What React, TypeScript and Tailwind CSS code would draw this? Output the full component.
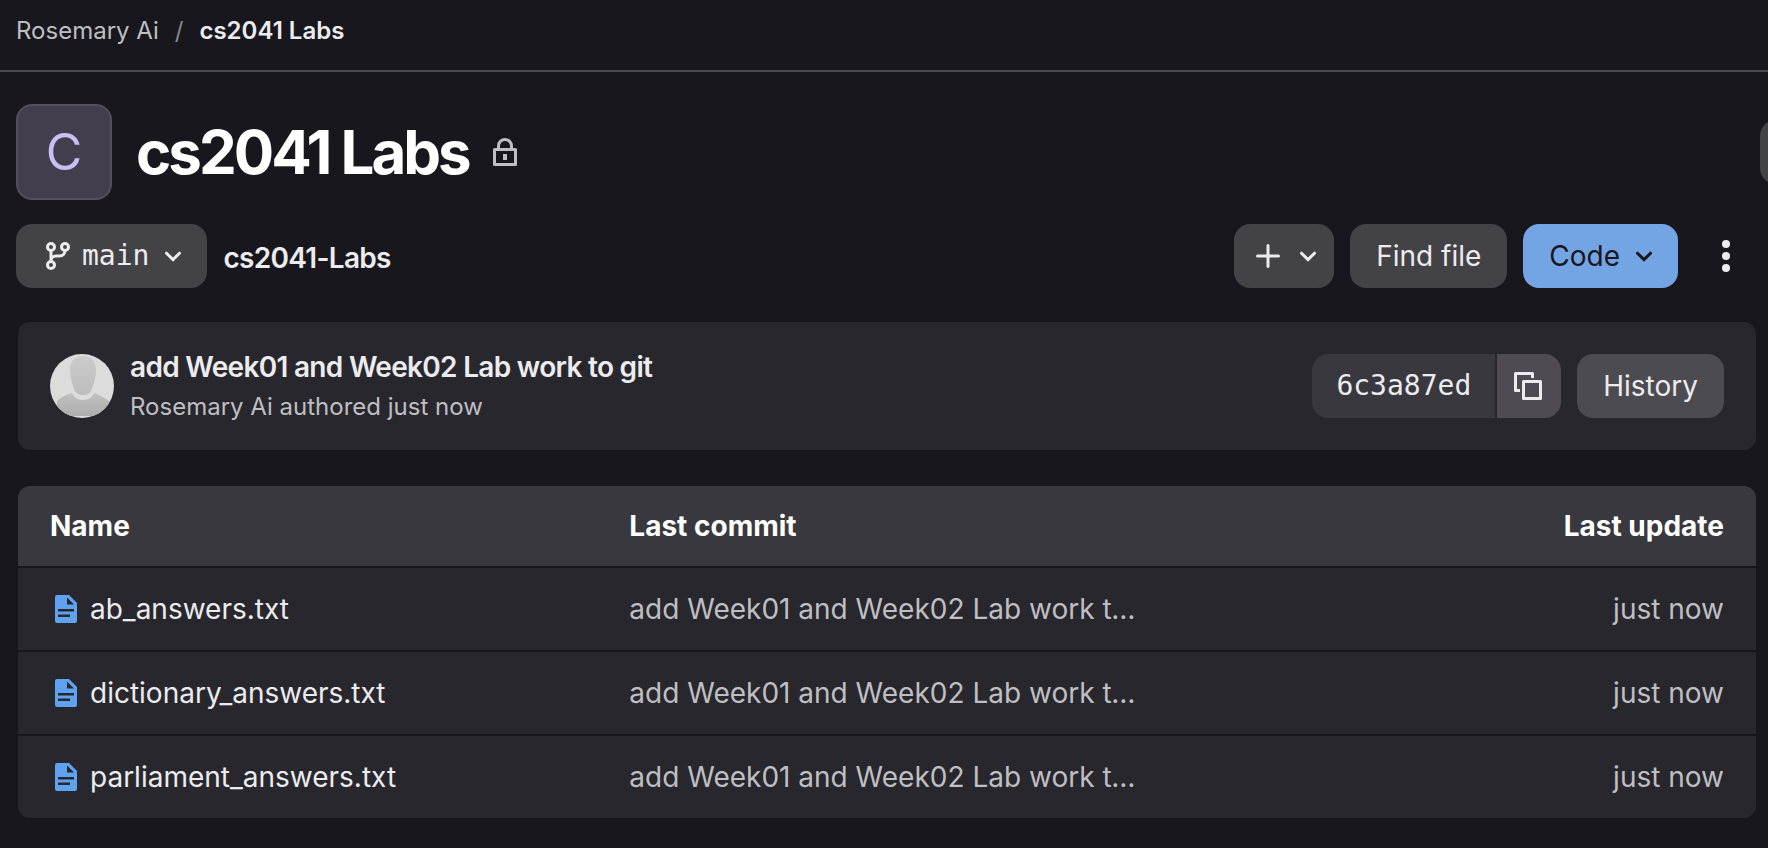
import type { ReactNode } from "react";

const COMMIT_TITLE = "add Week01 and Week02 Lab work to git";

const FILES = ["ab_answers.txt", "dictionary_answers.txt", "parliament_answers.txt"];

function Icon({ className, children }: { className?: string; children: ReactNode }) {
  return (
    <svg viewBox="0 0 16 16" fill="currentColor" className={`size-8 shrink-0 ${className ?? ""}`} aria-hidden>
      {children}
    </svg>
  );
}

function ChevronDown() {
  return (
    <Icon>
      <path d="M4.75 6.6 8 9.8l3.25-3.2" fill="none" stroke="currentColor" strokeWidth="1.5" strokeLinecap="round" />
    </Icon>
  );
}

function PlusIcon() {
  return (
    <Icon>
      <path d="M8 2.75v10.5M2.75 8h10.5" fill="none" stroke="currentColor" strokeWidth="1.5" strokeLinecap="round" />
    </Icon>
  );
}

function BranchIcon() {
  return (
    <Icon>
      <g fill="none" stroke="currentColor" strokeWidth="1.5">
        <circle cx="4.5" cy="3.5" r="1.75" />
        <circle cx="11.5" cy="3.5" r="1.75" />
        <circle cx="4.5" cy="12.5" r="1.75" />
        <path d="M4.5 5.25v5.5M11.5 5.25c0 1.6-1.1 2.75-2.75 2.75H7c-1.4 0-2.5.9-2.5 2.25" />
      </g>
    </Icon>
  );
}

function LockIcon() {
  return (
    <Icon>
      <g fill="none" stroke="currentColor" strokeWidth="1.5" strokeLinejoin="round">
        <rect x="2.75" y="6.75" width="10.5" height="7.5" />
        <path d="M4.75 6.75V5a3.25 3.25 0 0 1 6.5 0v1.75" />
      </g>
      <path d="M7 9h2v3H7z" />
    </Icon>
  );
}

function CopyIcon() {
  return (
    <Icon>
      <g fill="none" stroke="currentColor" strokeWidth="1.5" strokeLinejoin="round">
        <path d="M3.5 10.25H1.25v-8.5h8.5V4" />
        <rect x="5.25" y="5.75" width="8.5" height="8.5" />
      </g>
    </Icon>
  );
}

function FileIcon() {
  return (
    <Icon className="text-[#5fa3f0]">
      <path
        fillRule="evenodd"
        d="M3.5 1a1 1 0 0 0-1 1v12a1 1 0 0 0 1 1h9a1 1 0 0 0 1-1V5L9.5 1zM8.5 2.25V5.75H12zM4 8h8v1.3H4zM4 10.7h6V12H4z"
      />
    </Icon>
  );
}

function Avatar() {
  return (
    <svg viewBox="0 0 64 64" className="size-16 shrink-0 rounded-full" role="img" aria-label="Rosemary Ai">
      <defs>
        <linearGradient id="head" x1="0" y1="0" x2="0" y2="1">
          <stop offset="0" stopColor="#cbcbcb" />
          <stop offset="1" stopColor="#bdbdbd" />
        </linearGradient>
        <linearGradient id="body" x1="0" y1="0" x2="0" y2="1">
          <stop offset="0" stopColor="#c0c0c0" />
          <stop offset="1" stopColor="#aeaeae" />
        </linearGradient>
      </defs>
      <rect width="64" height="64" fill="#dcdcdc" />
      <path d="M33 2c9 0 13 6 13 14 0 7-2 13-4 19-1 4-5 6-9 6s-8-2-9-6c-2-6-4-12-4-19C20 8 24 2 33 2z" fill="url(#head)" />
      <path d="M22 39c2 5 6 7 11 7s9-2 11-7c6 2 11 5 15 8v15H7V47c4-4 9-6 15-8z" fill="url(#body)" />
    </svg>
  );
}

export default function App() {
  return (
    <div className="min-h-screen overflow-hidden bg-[#18171d] font-[Inter,sans-serif] text-[28px] leading-8 text-[#ececef]">
      <nav aria-label="Breadcrumb" className="flex h-18 items-start gap-4 border-b-2 border-[#4c4b51] px-4 pt-[15px] text-2xl leading-8">
        <a href="#" className="text-[#bfbfc3]">Rosemary Ai</a>
        <span className="text-[#89888d]">/</span>
        <a href="#" className="font-semibold">cs2041 Labs</a>
      </nav>

      <header className="mt-8 flex items-center pl-4">
        <div className="flex size-24 items-center justify-center rounded-2xl border-2 border-[#534f5e] bg-[#433e4e] text-[50px] text-[#cbbff2]">
          C
        </div>
        <h1 className="ml-6 text-6xl font-bold tracking-tighter text-white">cs2041 Labs</h1>
        <span className="ml-5 text-[#bfbfc3]">
          <LockIcon />
        </span>
        <button type="button" aria-label="Notifications" className="-mr-14 ml-auto h-16 w-16 rounded-2xl bg-[#434247]" />
      </header>

      <div className="mt-6 flex items-center gap-4 pr-[10px] pl-4">
        <button type="button" className="flex h-16 items-center gap-2 rounded-2xl bg-[#434247] pr-[18px] pl-[26px] font-['DejaVu_Sans_Mono',monospace]">
          <BranchIcon />
          main
          <ChevronDown />
        </button>
        <a href="#" className="pt-1 font-semibold tracking-tight">cs2041-Labs</a>
        <div className="ml-auto flex items-center gap-4">
          <button type="button" aria-label="Add to tree" className="flex h-16 items-center gap-2 rounded-2xl bg-[#434247] pr-[10px] pl-[18px]">
            <PlusIcon />
            <ChevronDown />
          </button>
          <button type="button" className="h-16 rounded-2xl bg-[#434247] px-[26px]">Find file</button>
          <button type="button" className="flex h-16 items-center gap-2 rounded-2xl bg-[#73a4e4] pr-[18px] pl-[26px] text-[#18171d]">
            Code
            <ChevronDown />
          </button>
          <button type="button" aria-label="Actions" className="flex size-16 items-center justify-center">
            <Icon>
              <circle cx="8" cy="2" r="2" />
              <circle cx="8" cy="8" r="2" />
              <circle cx="8" cy="14" r="2" />
            </Icon>
          </button>
        </div>
      </div>

      <section className="mt-[34px] mr-3 ml-[18px] flex h-32 items-center rounded-xl bg-[#28272d] px-8">
        <Avatar />
        <div className="ml-4 pt-0.5">
          <a href="#" className="block font-semibold tracking-tight">{COMMIT_TITLE}</a>
          <p className="mt-2 text-2xl leading-8 text-[#bfbfc3]">Rosemary Ai authored just now</p>
        </div>
        <div className="ml-auto flex h-16 gap-4">
          <div className="flex gap-0.5">
            <span className="flex items-center rounded-l-2xl bg-[#3a383f] px-6 font-['DejaVu_Sans_Mono',monospace]">6c3a87ed</span>
            <button type="button" aria-label="Copy commit SHA" className="flex w-16 items-center justify-center rounded-r-2xl bg-[#4e4b53]">
              <CopyIcon />
            </button>
          </div>
          <button type="button" className="rounded-2xl bg-[#4c4b51] px-[26px]">History</button>
        </div>
      </section>

      <div className="mt-9 mr-3 ml-[18px] overflow-hidden rounded-xl">
        <table className="w-full table-fixed border-separate border-spacing-0 text-left">
          <thead className="bg-[#3a383f] text-white">
            <tr className="h-20">
              <th className="w-1/3 px-8 font-bold">Name</th>
              <th className="w-1/3 px-8 font-bold">Last commit</th>
              <th className="w-1/3 px-8 text-right font-bold">Last update</th>
            </tr>
          </thead>
          <tbody className="bg-[#28272d] text-[#bfbfc3]">
            {FILES.map((name) => (
              <tr key={name} className="h-21">
                <td className="border-t-2 border-[#18171d] px-8">
                  <a href="#" className="flex items-center gap-2 text-[#ececef]">
                    <FileIcon />
                    {name}
                  </a>
                </td>
                <td className="border-t-2 border-[#18171d] px-8">
                  <a href="#" className="block truncate">{COMMIT_TITLE}</a>
                </td>
                <td className="border-t-2 border-[#18171d] px-8 text-right">
                  <time>just now</time>
                </td>
              </tr>
            ))}
          </tbody>
        </table>
      </div>
    </div>
  );
}
